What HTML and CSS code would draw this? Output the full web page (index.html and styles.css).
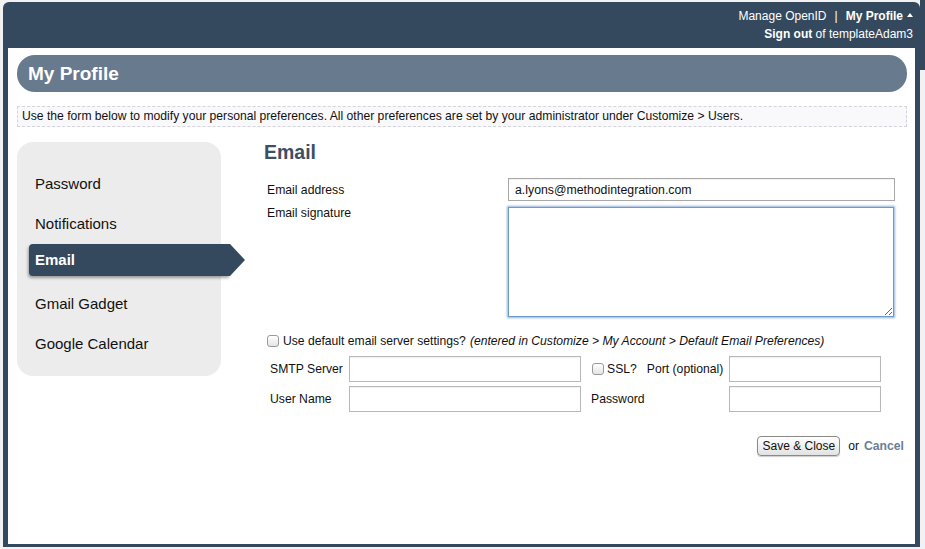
FILE: index.html
```html
<!DOCTYPE html>
<html>
<head>
<meta charset="utf-8">
<title>My Profile</title>
<link rel="stylesheet" href="styles.css">
</head>
<body>
<div class="modal">
  <div class="topbar">
    <div class="toplinks"><a class="toplink">Manage OpenID</a><span class="sep">|</span><a class="toplink bold">My Profile</a><span class="caret"></span></div>
    <div class="toplinks"><a class="toplink bold">Sign out</a> of templateAdam3</div>
  </div>
  <div class="content">
    <div class="titlebar">My Profile</div>
    <div class="info">Use the form below to modify your personal preferences. All other preferences are set by your administrator under Customize &gt; Users.</div>
    <div class="main">
      <ul class="nav">
        <li class="nav-item">Password</li>
        <li class="nav-item">Notifications</li>
        <li class="nav-item active">Email</li>
        <li class="nav-item">Gmail Gadget</li>
        <li class="nav-item">Google Calendar</li>
      </ul>
      <div class="panel">
        <h2 class="heading">Email</h2>
        <div class="grid1">
          <label class="lbl lbl-mid">Email address</label>
          <input class="field field-email" type="text" value="a.lyons@methodintegration.com">
          <label class="lbl lbl-top">Email signature</label>
          <textarea class="sig"></textarea>
        </div>
        <div class="check-row">
          <span class="cb"></span>
          <span>Use default email server settings?</span>
          <em class="note">(entered in Customize &gt; My Account &gt; Default Email Preferences)</em>
        </div>
        <div class="grid2">
          <label class="lbl2">SMTP Server</label>
          <input class="field field-row" type="text">
          <div class="lbl3"><span class="cb cb-ssl"></span><span class="ssl">SSL?</span><span>Port (optional)</span></div>
          <input class="field field-row" type="text">
          <label class="lbl2">User Name</label>
          <input class="field field-row" type="text">
          <div class="lbl3">Password</div>
          <input class="field field-row" type="password">
        </div>
        <div class="actions">
          <button class="btn" type="button">Save &amp; Close</button>
          <span class="or">or</span>
          <a class="cancel">Cancel</a>
        </div>
      </div>
    </div>
  </div>
</div>
</body>
</html>
```
FILE: styles.css
```css
* { box-sizing: border-box; }
html, body { margin: 0; padding: 0; }
body {
  width: 925px;
  height: 549px;
  overflow: hidden;
  font-family: "Liberation Sans", Arial, Helvetica, sans-serif;
  font-size: 12px;
  color: #111;
  background: #f2f2f2 linear-gradient(#34495e, #34495e) right top / 5px 70px no-repeat;
}
.modal {
  margin: 2px 0 0 3px;
  width: 917px;
  height: 545px;
  background: #34495e;
  border-radius: 6px 6px 0 0;
  padding: 0 5px 3px 5px;
  display: flex;
  flex-direction: column;
}
.topbar {
  height: 46px;
  padding: 5px 2px 0 0;
  text-align: right;
  color: #fff;
  font-size: 12px;
  line-height: 18px;
}
.toplink { color: #fff; text-decoration: none; }
.bold { font-weight: bold; }
.sep { margin: 0 8px; }
.caret {
  display: inline-block;
  width: 0;
  height: 0;
  margin-left: 4px;
  vertical-align: 3px;
  border-left: 3px solid transparent;
  border-right: 3px solid transparent;
  border-bottom: 4px solid #fff;
}
.content {
  flex: 1;
  background: #fff;
  padding: 7px 8px 0 9px;
}
.titlebar {
  height: 37px;
  border-radius: 18px;
  background: #687a8e;
  color: #fff;
  font-size: 19px;
  font-weight: bold;
  line-height: 37px;
  padding-left: 11px;
}
.info {
  margin-top: 14px;
  height: 21px;
  border: 1px dashed #d4d4de;
  background: #f9f9fc;
  padding-left: 4px;
  line-height: 19px;
  font-size: 12.15px;
  color: #111;
  white-space: nowrap;
}
.main {
  margin-top: 15px;
  display: flex;
  align-items: flex-start;
}
.nav {
  list-style: none;
  margin: 0;
  width: 204px;
  flex: none;
  background: #ececec;
  border-radius: 16px;
  padding: 22px 0 12px 0;
}
.nav-item {
  height: 40px;
  line-height: 40px;
  padding-left: 18px;
  font-size: 15px;
  color: #111;
}
.nav-item.active {
  position: relative;
  margin-left: 12px;
  margin-bottom: 8px;
  width: 201px;
  height: 32px;
  line-height: 32px;
  padding-left: 6px;
  background: #34495e;
  color: #fff;
  font-weight: bold;
  border-radius: 4px 0 0 4px;
  box-shadow: -1px 2px 3px rgba(0, 0, 0, 0.35);
}
.nav-item.active::after {
  content: "";
  position: absolute;
  left: 100%;
  top: 0;
  width: 0;
  height: 0;
  border-top: 16px solid transparent;
  border-bottom: 16px solid transparent;
  border-left: 15px solid #34495e;
}
.panel {
  margin-left: 43px;
  flex: 1;
  padding-right: 3px;
}
.heading {
  margin: 0;
  font-size: 19.5px;
  line-height: 20px;
  font-weight: bold;
  color: #3c4f64;
}
.grid1 {
  margin-top: 16px;
  display: grid;
  grid-template-columns: 244px 387px;
  row-gap: 6px;
}
.lbl { padding-left: 3px; font-size: 12.2px; color: #111; }
.lbl-mid { line-height: 22px; padding-top: 1px; }
.lbl-top { line-height: 13px; }
.field {
  display: block;
  border: 1px solid #b0b0b0;
  background: #fff;
  font-family: "Liberation Sans", Arial, Helvetica, sans-serif;
  font-size: 12.3px;
  color: #111;
  padding: 0 6px;
  margin: 0;
  box-shadow: inset 0 1px 1px rgba(0, 0, 0, 0.06);
  outline: none;
}
.field-email { height: 23px; width: 387px; border-color: #a8a8a8; }
.sig {
  display: block;
  width: 386px;
  height: 110px;
  margin: 0;
  border: 1px solid #6b9acb;
  box-shadow: 0 0 2px 1px rgba(100, 150, 205, 0.7);
  resize: both;
  outline: none;
}
.check-row {
  margin-top: 16px;
  height: 16px;
  display: flex;
  align-items: center;
  padding-left: 3px;
  font-size: 12.15px;
  white-space: nowrap;
}
.cb {
  display: inline-block;
  width: 12px;
  height: 12px;
  border: 1px solid #9a9a9a;
  border-radius: 3px;
  background: linear-gradient(#ffffff, #e4e4e4);
  margin-right: 4px;
  flex: none;
}
.note { margin-left: 4px; }
.grid2 {
  margin-top: 7px;
  display: grid;
  grid-template-columns: 85px 232px 148px 152px;
  grid-auto-rows: 26px;
  row-gap: 4px;
  align-items: center;
}
.lbl2 { padding-left: 6px; font-size: 12.2px; }
.lbl3 {
  padding-left: 10px;
  display: flex;
  align-items: center;
  font-size: 12.2px;
  white-space: nowrap;
}
.cb-ssl { margin-left: 1px; margin-right: 3px; }
.ssl { margin-right: 10px; }
.field-row { height: 26px; width: 100%; border-color: #b8b8b8; }
.actions {
  margin-top: 24px;
  display: flex;
  justify-content: flex-end;
  align-items: center;
  font-size: 12.2px;
}
.btn {
  height: 20px;
  padding: 0 4px;
  font-family: "Liberation Sans", Arial, Helvetica, sans-serif;
  font-size: 12px;
  color: #111;
  border: 1px solid #8a8a8a;
  border-radius: 4px;
  background: linear-gradient(#ffffff, #e2e2e2);
  box-shadow: 0 1px 1px rgba(0, 0, 0, 0.2);
  margin: 0;
}
.or { margin-left: 8px; }
.cancel {
  margin-left: 5px;
  font-weight: bold;
  color: #6a7f97;
}
```
